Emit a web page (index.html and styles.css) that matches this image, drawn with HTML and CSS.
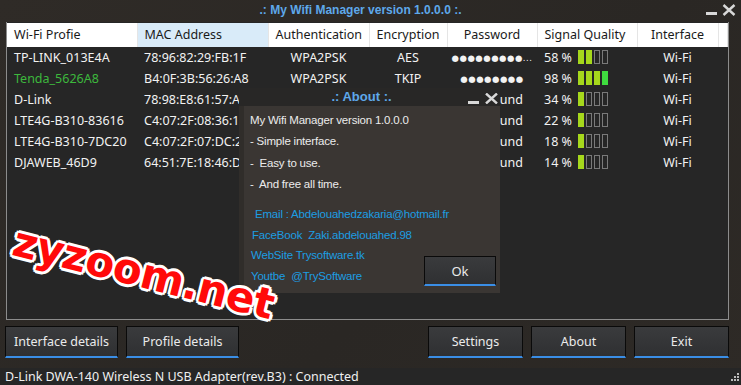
FILE: index.html
```html
<!DOCTYPE html>
<html lang="en">
<head>
  <meta charset="UTF-8" />
  <title>My Wifi Manager</title>
  <link rel="stylesheet" href="styles.css">
</head>
<body>
  <div class="window">
    <div class="titlebar">
      <span class="title">.: My Wifi Manager version 1.0.0.0 :.</span>
      <div class="winctl">
        <svg width="12" height="12" viewBox="0 0 12 12"><rect x="0" y="8" width="11" height="3" fill="#d8d8d8"/></svg>
        <svg width="14" height="12" viewBox="0 0 14 12"><path d="M1.5 1 L12.5 11 M12.5 1 L1.5 11" stroke="#d8d8d8" stroke-width="2.4"/></svg>
      </div>
    </div>

    <div class="list">
      <table id="redesTable">
        <colgroup>
          <col style="width:130px"><col style="width:131px"><col style="width:101px"><col style="width:78px">
          <col style="width:90px"><col style="width:100px"><col style="width:81px"><col>
        </colgroup>
        <thead>
          <tr>
            <th class="izq">Wi-Fi Profie</th>
            <th class="izq sel">MAC Address</th>
            <th class="izq">Authentication</th>
            <th class="izq">Encryption</th>
            <th>Password</th>
            <th class="izq">Signal Quality</th>
            <th>Interface</th>
            <th></th>
          </tr>
        </thead>
        <tbody>
          <!-- filas generadas por script -->
        </tbody>
      </table>
    </div>

    <div class="toolbar">
      <div class="grupo">
        <button class="btn btn-ancho">Interface details</button>
        <button class="btn btn-ancho">Profile details</button>
      </div>
      <div class="grupo">
        <button class="btn">Settings</button>
        <button class="btn">About</button>
        <button class="btn">Exit</button>
      </div>
    </div>

    <div class="status">
      D-Link DWA-140 Wireless N USB Adapter(rev.B3) : Connected
      <svg class="grip" width="9" height="10" viewBox="0 0 9 10">
        <rect x="6" y="0" width="2" height="2" fill="#bbb"/>
        <rect x="3" y="3" width="2" height="2" fill="#bbb"/><rect x="6" y="3" width="2" height="2" fill="#bbb"/>
        <rect x="0" y="6" width="2" height="2" fill="#bbb"/><rect x="3" y="6" width="2" height="2" fill="#bbb"/><rect x="6" y="6" width="2" height="2" fill="#bbb"/>
      </svg>
    </div>

    <div class="about">
      <div class="about-title">
        <span>.: About :.</span>
        <div class="about-ctl">
          <svg width="12" height="12" viewBox="0 0 12 12"><rect x="0" y="8" width="11" height="3" fill="#d8d8d8"/></svg>
          <svg width="13" height="11" viewBox="0 0 13 11"><path d="M1 0.5 L12 10.5 M12 0.5 L1 10.5" stroke="#d8d8d8" stroke-width="2.4"/></svg>
        </div>
      </div>
      <div class="about-body">
        <p>My Wifi Manager version 1.0.0.0</p>
        <p>- Simple interface.</p>
        <p>-&nbsp; Easy to use.</p>
        <p>-&nbsp; And free all time.</p>
        <div class="about-pie">
          <div class="links">
            <p class="l1">Email : Abdelouahedzakaria@hotmail.fr</p>
            <p class="l2">FaceBook&nbsp; Zaki.abdelouahed.98</p>
            <p>WebSite Trysoftware.tk</p>
            <p>Youtbe&nbsp; @TrySoftware</p>
          </div>
          <button class="btn btn-ok">Ok</button>
        </div>
      </div>
    </div>

    <div class="marca">zyzoom.net</div>
  </div>

  <script>
    // Filas ocultas tras el diálogo: solo se ve el final de la contraseña
    const redes = [
      { nombre: 'TP-LINK_013E4A', mac: '78:96:82:29:FB:1F', auth: 'WPA2PSK', enc: 'AES', pass: '●●●●●●●●●...', senal: 58 },
      { nombre: 'Tenda_5626A8', mac: 'B4:0F:3B:56:26:A8', auth: 'WPA2PSK', enc: 'TKIP', pass: '●●●●●●●●', senal: 98, activa: true },
      { nombre: 'D-Link', mac: '78:98:E8:61:57:A', auth: '', enc: '', pass: 'und', senal: 34 },
      { nombre: 'LTE4G-B310-83616', mac: 'C4:07:2F:08:36:1', auth: '', enc: '', pass: 'und', senal: 22 },
      { nombre: 'LTE4G-B310-7DC20', mac: 'C4:07:2F:07:DC:2', auth: '', enc: '', pass: 'und', senal: 18 },
      { nombre: 'DJAWEB_46D9', mac: '64:51:7E:18:46:D', auth: '', enc: '', pass: 'und', senal: 14 }
    ];

    function barras(valor) {
      let html = '';
      for (let i = 0; i < 4; i++) {
        let clase = 'barra';
        if (valor >= i * 25 + 10 || i === 0) clase += ' llena';
        if (i === 3 && valor > 90) clase += ' verde';
        html += `<span class="${clase}"></span>`;
      }
      return html;
    }

    const cuerpo = document.querySelector('#redesTable tbody');
    redes.forEach(red => {
      const fila = document.createElement('tr');
      if (red.activa) fila.className = 'activa';
      let pass = red.pass;
      if (pass.startsWith('●')) pass = `<span class="puntos">${pass}</span>`;
      else pass = `<span class="oculto">${pass}</span>`;
      fila.innerHTML = `
        <td class="izq">${red.nombre}</td>
        <td class="izq">${red.mac}</td>
        <td>${red.auth}</td>
        <td>${red.enc}</td>
        <td class="${red.pass.startsWith('●') ? '' : 'der'}">${pass}</td>
        <td class="izq"><div class="senal"><span class="pct">${red.senal} %</span>${barras(red.senal)}</div></td>
        <td>Wi-Fi</td>
        <td></td>
      `;
      cuerpo.appendChild(fila);
    });
  </script>
</body>
</html>
```

FILE: styles.css
```css
body {
  margin: 0;
  padding: 0;
  background: #262626;
  font-family: "Noto Sans", "Open Sans", sans-serif;
}
.window {
  position: relative;
  width: 741px;
  height: 385px;
  overflow: hidden;
  background: linear-gradient(135deg, #2f2b27, #2a2724 60%, #2e2a26);
  display: flex;
  flex-direction: column;
}
.titlebar {
  height: 22px;
  display: flex;
  align-items: center;
  justify-content: center;
  position: relative;
}
.title {
  color: #5ea8ea;
  font-family: "Liberation Sans", Arial, sans-serif;
  font-weight: bold;
  font-size: 12px;
  margin-left: -20px;
  margin-top: -1px;
}
.winctl {
  position: absolute;
  right: 5px;
  top: 4px;
  display: flex;
  gap: 4px;
}
.list {
  margin: 0 12px 0 6px;
  height: 297px;
  border: 1px solid #8c8c8c;
  border-top: none;
  background: #262626;
  padding-top: 1px;
}
#redesTable {
  width: 100%;
  table-layout: fixed;
  border-collapse: collapse;
  font-size: 12.5px;
}
#redesTable th {
  background: #fff;
  color: #1a1a1a;
  font-weight: normal;
  height: 24px;
  padding: 0 7px;
  border-right: 1px solid #e5e5e5;
  text-align: center;
  white-space: nowrap;
}
#redesTable th.sel {
  background: #d9ebf9;
}
#redesTable th.izq {
  text-align: left;
}
#redesTable td {
  color: #f2f2f2;
  height: 21px;
  padding: 0 3px;
  text-align: center;
  white-space: nowrap;
  overflow: hidden;
}
#redesTable td.izq {
  text-align: left;
  padding-left: 7px;
}
#redesTable td.der {
  text-align: right;
  padding-right: 14px;
}
#redesTable tr.activa td:first-child {
  color: #3db83d;
}
.puntos {
  font-family: "DejaVu Sans", sans-serif;
  font-size: 8.5px;
  letter-spacing: 0.5px;
  vertical-align: 1px;
}
.senal {
  display: flex;
  align-items: center;
  gap: 2px;
}
.pct {
  width: 32px;
}
.barra {
  width: 4px;
  height: 12px;
  border: 1px solid #7a7a7a;
}
.barra.llena {
  background: #a6d81c;
  border-color: #a6d81c;
}
.barra.verde {
  background: #3fdc3f;
  border-color: #3fdc3f;
}
.toolbar {
  height: 42px;
  display: flex;
  justify-content: space-between;
  align-items: flex-start;
  padding: 6px 12px 0 5px;
}
.grupo {
  display: flex;
  gap: 8px;
}
.btn {
  width: 95px;
  height: 32px;
  background: linear-gradient(#3a3b3d, #2f3032);
  border: 1px solid #0a0a0a;
  border-bottom: 2px solid #3a8ee6;
  color: #ebebeb;
  font-family: "Noto Sans", "Open Sans", sans-serif;
  font-size: 12.5px;
  padding: 0;
  flex-shrink: 0;
}
.btn-ancho {
  width: 113px;
}
.status {
  flex: 1;
  background: #262626;
  color: #f0f0f0;
  font-size: 12.5px;
  padding-left: 5px;
  display: flex;
  align-items: center;
  position: relative;
}
.grip {
  position: absolute;
  right: 1px;
  bottom: 2px;
}
.about {
  position: absolute;
  left: 239px;
  top: 88px;
  width: 261px;
  height: 205px;
  background: #302d2a;
  display: flex;
  flex-direction: column;
}
.about-title {
  height: 20px;
  background: #282726;
  position: relative;
  display: flex;
  align-items: center;
  justify-content: center;
  color: #5ea8ea;
  font-family: "Liberation Sans", Arial, sans-serif;
  font-weight: bold;
  font-size: 13px;
  padding-right: 16px;
}
.about-ctl {
  position: absolute;
  right: 2px;
  top: 5px;
  display: flex;
  gap: 5px;
}
.about-body {
  flex: 1;
  margin-left: 5px;
  background: #3a3633;
  padding: 4px 5px 7px 6px;
  font-family: "Liberation Sans", Arial, sans-serif;
  font-size: 11.5px;
  color: #ececec;
  display: flex;
  flex-direction: column;
}
.about-body p {
  margin: 0;
  height: 21.6px;
  line-height: 21.6px;
  letter-spacing: -0.2px;
  white-space: nowrap;
}
.about-pie {
  flex: 1;
  display: flex;
  justify-content: space-between;
  align-items: flex-end;
  margin-top: 8px;
  position: relative;
}
.links {
  width: 0;
  flex: 1;
}
.links p {
  color: #1c9de2;
  height: 20.5px;
  line-height: 20.5px;
  margin-left: 1px;
}
.links p.l1 {
  margin-left: 5px;
}
.links p.l2 {
  margin-left: 2px;
}
.btn-ok {
  width: 72px;
  height: 30px;
  margin-bottom: 0;
  margin-right: -1px;
  font-size: 13px;
}
.marca {
  position: absolute;
  left: 14px;
  top: 216px;
  font-family: "DejaVu Sans", sans-serif;
  font-weight: bold;
  font-size: 42px;
  color: #ff0a0a;
  transform: rotate(14deg);
  transform-origin: left center;
  letter-spacing: -0.5px;
  text-shadow:
    3px 0 0 #fff, -3px 0 0 #fff, 0 3px 0 #fff, 0 -3px 0 #fff,
    2px 2px 0 #fff, -2px 2px 0 #fff, 2px -2px 0 #fff, -2px -2px 0 #fff;
}
```
